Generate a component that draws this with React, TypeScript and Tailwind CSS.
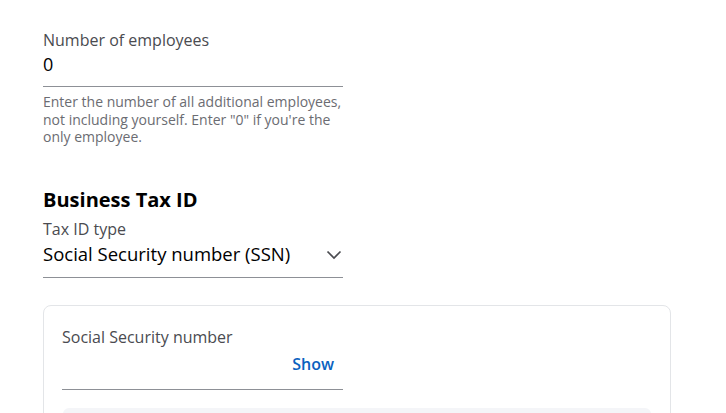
import React from "react";

const App = () => {
  return (
    <div className="w-[726px] h-[413px] overflow-hidden bg-white font-['Open_Sans',sans-serif] pl-[43px] pt-[29px]">
      <div className="w-[300px]">
        <label className="block text-[16px] leading-[22px] text-[#4a4b50]">Number of employees</label>
        <div className="h-[36px] border-b border-[#8d9096] text-[18px] leading-6 text-[#000] pt-[1px]">0</div>
        <p className="mt-[6px] text-[14px] leading-[17.5px] text-[#6b6c72]">
          Enter the number of all additional employees, not including yourself. Enter "0" if you're the only employee.
        </p>
      </div>

      <h2 className="mt-[40px] text-[20px] leading-7 font-bold text-[#000]">Business Tax ID</h2>
      <div className="w-[300px] mt-[4px]">
        <label className="block text-[16px] leading-[22px] text-[#4a4b50]">Tax ID type</label>
        <div className="flex items-start justify-between h-[38px] border-b border-[#8d9096] pt-[1px]">
          <span className="text-[18.5px] leading-[26px] text-[#000]">Social Security number (SSN)</span>
          <svg width="16" height="10" viewBox="0 0 16 10" className="mt-[9px] mr-[1px]">
            <path d="M1.5 1.5l6.5 6.5 6.5-6.5" fill="none" stroke="#4a4b50" strokeWidth="1.7" />
          </svg>
        </div>
      </div>

      <div className="mt-[27px] w-[628px] h-[140px] rounded-[8px] border border-[#e3e5e8] pt-[20px] pl-[18px] pr-[19px]">
        <div className="w-[281px]">
          <label className="block text-[16px] leading-[22px] text-[#4a4b50]">Social Security number</label>
          <div className="flex justify-end items-start h-[42px] border-b border-[#8d9096] pt-[5px]">
            <span className="text-[16px] leading-[22px] font-semibold text-[#0a62c0] mr-[9px]">Show</span>
          </div>
        </div>
        <div className="mt-[18px] ml-[1px] h-[40px] rounded-[6px] bg-[#f4f5f8]" />
      </div>
    </div>
  );
};

export default App;
